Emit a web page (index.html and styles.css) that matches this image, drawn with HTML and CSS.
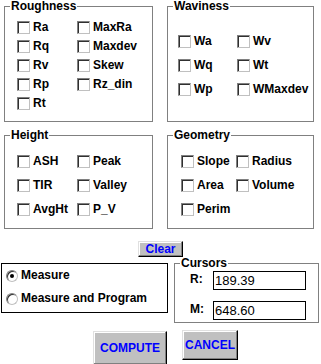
FILE: index.html
```html
<!DOCTYPE html>
<html>
<head>
<meta charset="utf-8">
<link rel="stylesheet" href="styles.css">
</head>
<body>
<div class="dlg">
  <div class="groups">
    <fieldset class="grp rough">
      <legend>Roughness</legend>
      <div class="opts">
        <label class="opt"><span class="cb"></span>Ra</label>
        <label class="opt"><span class="cb"></span>Rq</label>
        <label class="opt"><span class="cb"></span>Rv</label>
        <label class="opt"><span class="cb"></span>Rp</label>
        <label class="opt"><span class="cb"></span>Rt</label>
        <label class="opt"><span class="cb"></span>MaxRa</label>
        <label class="opt"><span class="cb"></span>Maxdev</label>
        <label class="opt"><span class="cb"></span>Skew</label>
        <label class="opt"><span class="cb"></span>Rz_din</label>
      </div>
    </fieldset>
    <fieldset class="grp wavi">
      <legend>Waviness</legend>
      <div class="opts">
        <label class="opt"><span class="cb"></span>Wa</label>
        <label class="opt"><span class="cb"></span>Wq</label>
        <label class="opt"><span class="cb"></span>Wp</label>
        <label class="opt"><span class="cb"></span>Wv</label>
        <label class="opt"><span class="cb"></span>Wt</label>
        <label class="opt"><span class="cb"></span>WMaxdev</label>
      </div>
    </fieldset>
    <fieldset class="grp height">
      <legend>Height</legend>
      <div class="opts">
        <label class="opt"><span class="cb"></span>ASH</label>
        <label class="opt"><span class="cb"></span>TIR</label>
        <label class="opt"><span class="cb"></span>AvgHt</label>
        <label class="opt"><span class="cb"></span>Peak</label>
        <label class="opt"><span class="cb"></span>Valley</label>
        <label class="opt"><span class="cb"></span>P_V</label>
      </div>
    </fieldset>
    <fieldset class="grp geom">
      <legend>Geometry</legend>
      <div class="opts">
        <label class="opt"><span class="cb"></span>Slope</label>
        <label class="opt"><span class="cb"></span>Area</label>
        <label class="opt"><span class="cb"></span>Perim</label>
        <label class="opt"><span class="cb"></span>Radius</label>
        <label class="opt"><span class="cb"></span>Volume</label>
      </div>
    </fieldset>
  </div>

  <div class="clear-row">
    <button class="btn clear">Clear</button>
  </div>

  <div class="bottom">
    <div class="mode">
      <label class="radio"><span class="rb on"></span>Measure</label>
      <label class="radio"><span class="rb"></span>Measure and Program</label>
    </div>
    <fieldset class="grp cursors">
      <legend>Cursors</legend>
      <div class="cur">
        <span class="cur-lbl">R:</span>
        <div class="tb">189.39</div>
        <span class="cur-lbl">M:</span>
        <div class="tb">648.60</div>
      </div>
    </fieldset>
  </div>

  <div class="actions">
    <button class="btn compute">COMPUTE</button>
    <button class="btn cancel">CANCEL</button>
  </div>
</div>
</body>
</html>
```
FILE: styles.css
```css
html, body {
  margin: 0;
  padding: 0;
  background: #fff;
}
body {
  width: 321px;
  height: 364px;
  overflow: hidden;
  font-family: "Liberation Sans", Arial, sans-serif;
  font-weight: bold;
  font-size: 12px;
  line-height: 13px;
  color: #000;
}

.groups {
  display: grid;
  grid-template-columns: 149px 147px;
  grid-template-rows: 122px 100px;
  column-gap: 14px;
  row-gap: 7px;
  padding-left: 4px;
}

fieldset.grp {
  margin: 0;
  padding: 0;
  border: 1px solid #808080;
  min-width: 0;
  box-sizing: border-box;
}
fieldset.grp legend {
  padding: 0 1px;
  margin-left: 5px;
  height: 13px;
  line-height: 13px;
}
.wavi legend, .geom legend { margin-left: 6px; }

.opts {
  display: grid;
  grid-auto-flow: column;
}
.rough .opts {
  grid-template-columns: 60px auto;
  grid-template-rows: repeat(5, 19px);
  padding: 5px 0 0 12px;
}
.wavi .opts {
  grid-template-columns: 59px auto;
  grid-template-rows: repeat(3, 24px);
  padding: 16px 0 0 10px;
}
.height .opts {
  grid-template-columns: 60px auto;
  grid-template-rows: repeat(3, 24px);
  padding: 7px 0 0 12px;
}
.geom .opts {
  grid-template-columns: 55px auto;
  grid-template-rows: repeat(3, 24px);
  padding: 7px 0 0 13px;
}

.opt {
  display: flex;
  align-items: center;
  gap: 3px;
  white-space: nowrap;
}
.cb {
  flex: none;
  width: 13px;
  height: 13px;
  box-sizing: border-box;
  background: #fff;
  border: 1px solid;
  border-color: #808080 #c0c0c0 #c0c0c0 #808080;
  box-shadow: inset 1px 1px #303030;
}

.clear-row {
  display: flex;
  justify-content: center;
  margin-top: 12px;
}

.btn {
  font-family: inherit;
  font-weight: bold;
  font-size: 12px;
  line-height: 13px;
  color: #0000ff;
  padding: 0;
  margin: 0;
  background: #c0c0c0;
  box-sizing: border-box;
  border: 1px solid;
  border-color: #e0e0e0 #000 #000 #e0e0e0;
  box-shadow: inset -1px -1px #808080, inset 1px 1px #fff;
}
.clear {
  width: 45px;
  height: 16px;
}

.bottom {
  display: flex;
  align-items: flex-start;
}
.mode {
  box-sizing: border-box;
  width: 167px;
  height: 50px;
  margin: 6px 0 0 1px;
  border: 1px solid #000;
  padding: 0 0 0 4px;
  display: grid;
  grid-template-rows: 23px 23px;
}
.radio {
  display: flex;
  align-items: center;
  gap: 3px;
  white-space: nowrap;
}
.rb {
  flex: none;
  position: relative;
  width: 12px;
  height: 12px;
  box-sizing: border-box;
  border-radius: 50%;
  background: #fff;
  border: 1px solid;
  border-color: #808080 #c0c0c0 #c0c0c0 #808080;
  box-shadow: inset 1px 1px #303030;
}
.rb.on::after {
  content: "";
  position: absolute;
  left: 3px;
  top: 3px;
  width: 4px;
  height: 4px;
  border-radius: 50%;
  background: #000;
}

.cursors {
  width: 145px;
  height: 66px;
  margin-left: 6px !important;
}
.cursors legend { margin-left: 7px; }
.cur {
  display: grid;
  grid-template-columns: 23px 93px;
  grid-template-rows: 19px 19px;
  row-gap: 11px;
  padding: 1px 0 0 15px;
  align-items: center;
}
.cur-lbl {
  align-self: start;
  padding-top: 2px;
}
.tb {
  box-sizing: border-box;
  height: 19px;
  border: 1px solid #000;
  padding-left: 1px;
  font-weight: normal;
  font-size: 13px;
  line-height: 17px;
}

.actions {
  display: flex;
  align-items: flex-start;
  padding-left: 93px;
  margin-top: 7px;
}
.compute {
  width: 74px;
  height: 34px;
  margin-top: 1px;
}
.cancel {
  width: 56px;
  height: 30px;
  margin-left: 15px;
}
```
